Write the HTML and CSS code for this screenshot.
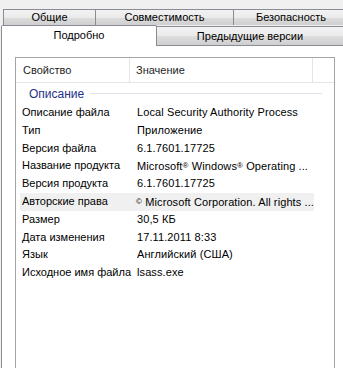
FILE: index.html
```html
<!DOCTYPE html>
<html lang="ru">
<head>
    <meta charset="UTF-8">
    <title>Свойства: lsass.exe</title>
    <link rel="stylesheet" href="styles.css">
</head>
<body>

    <!-- Tabs: upper row -->
    <div class="tab-row tab-row-top">
        <div class="tab tab-general">Общие</div>
        <div class="tab tab-compat">Совместимость</div>
        <div class="tab tab-security">Безопасность</div>
    </div>

    <!-- Tabs: lower row, with the selected tab -->
    <div class="tab-row tab-row-bottom">
        <div class="tab tab-active">Подробно</div>
        <div class="tab tab-versions">Предыдущие версии</div>
    </div>

    <div class="panel">
        <div class="list">
            <div class="list-head">
                <div class="col-name">Свойство</div>
                <div class="col-value">Значение</div>
                <div class="col-rest"></div>
            </div>

            <div class="group">
                <span class="group-title">Описание</span>
                <span class="group-line"></span>
            </div>

            <div class="row"><div class="cell-name">Описание файла</div><div class="cell-value">Local Security Authority Process</div></div>
            <div class="row"><div class="cell-name">Тип</div><div class="cell-value">Приложение</div></div>
            <div class="row"><div class="cell-name">Версия файла</div><div class="cell-value">6.1.7601.17725</div></div>
            <div class="row"><div class="cell-name">Название продукта</div><div class="cell-value">Microsoft<span class="mark">®</span> Windows<span class="mark">®</span> Operating ...</div></div>
            <div class="row"><div class="cell-name">Версия продукта</div><div class="cell-value">6.1.7601.17725</div></div>
            <div class="row row-hover"><div class="cell-name">Авторские права</div><div class="cell-value"><span class="mark">©</span> Microsoft Corporation. All rights ...</div></div>
            <div class="row"><div class="cell-name">Размер</div><div class="cell-value">30,5 КБ</div></div>
            <div class="row"><div class="cell-name">Дата изменения</div><div class="cell-value">17.11.2011 8:33</div></div>
            <div class="row"><div class="cell-name">Язык</div><div class="cell-value">Английский (США)</div></div>
            <div class="row"><div class="cell-name">Исходное имя файла</div><div class="cell-value">lsass.exe</div></div>
        </div>
    </div>

</body>
</html>
```

FILE: styles.css
```css
body {
    font-family: "Liberation Sans", Arial, sans-serif;
    font-size: 11px;
    color: #000;
    margin: 0;
    padding: 0;
    background-color: #f0f0f0;
    height: 368px;
    overflow: hidden;
    display: flex;
    flex-direction: column;
}
.tab-row {
    display: flex;
    white-space: nowrap;
    flex-shrink: 0;
}
.tab-row-top {
    padding-top: 9px;
    padding-left: 3px;
    height: 16px;
}
.tab {
    box-sizing: border-box;
    text-align: center;
    border: 1px solid #898c95;
    border-bottom: none;
    background: linear-gradient(#f2f2f2, #ebebeb 50%, #dddddd 51%, #cfcfcf);
    flex-shrink: 0;
}
.tab-row-top .tab {
    height: 16px;
    line-height: 15px;
}
.tab-general {
    width: 93px;
}
.tab-compat {
    width: 138px;
    border-left: none;
}
.tab-security {
    width: 115px;
    border-left: none;
}
.tab-row-bottom {
    height: 21px;
    align-items: flex-end;
}
.tab-active {
    width: 156px;
    height: 21px;
    margin-left: 1px;
    background: #fff;
    line-height: 19px;
    border-top-left-radius: 2px;
    border-top-right-radius: 2px;
}
.tab-versions {
    flex: 1;
    height: 20px;
    line-height: 18px;
    border-left: none;
    border-right: none;
    border-bottom: 1px solid #898c95;
}
.panel {
    flex: 1;
    min-height: 0;
    overflow: hidden;
    margin-left: 1px;
    border-left: 1px solid #898c95;
    background-color: #fff;
    padding: 11px 0 0 13px;
}
.list {
    width: 320px;
    height: 100%;
    box-sizing: border-box;
    border: 1px solid #a5a5a5;
    border-bottom: none;
}
.list-head {
    display: flex;
    height: 24px;
    line-height: 24px;
    border-bottom: 1px solid #e5e5e5;
    color: #1e1e1e;
}
.col-name {
    width: 114px;
    padding-left: 7px;
    box-sizing: border-box;
    border-right: 1px solid #e5e5e5;
}
.col-value {
    width: 183px;
    padding-left: 6px;
    box-sizing: border-box;
    border-right: 1px solid #e5e5e5;
}
.group {
    display: flex;
    align-items: center;
    height: 21px;
    padding-left: 13px;
    padding-right: 12px;
}
.group-title {
    color: #1e3287;
    font-size: 12px;
}
.group-line {
    flex: 1;
    height: 1px;
    margin-left: 6px;
    background-color: #e2e3ea;
}
.row {
    display: flex;
    height: 17.8px;
    line-height: 17.8px;
    margin-left: 4px;
    width: 294px;
}
.row-hover {
    background-color: #f0f0f0;
}
.cell-name {
    width: 115px;
    padding-left: 2px;
    box-sizing: border-box;
}
.cell-value {
    padding-left: 2px;
    white-space: nowrap;
    letter-spacing: 0.1px;
}
.mark {
    font-size: 8px;
    vertical-align: 2px;
}
```
